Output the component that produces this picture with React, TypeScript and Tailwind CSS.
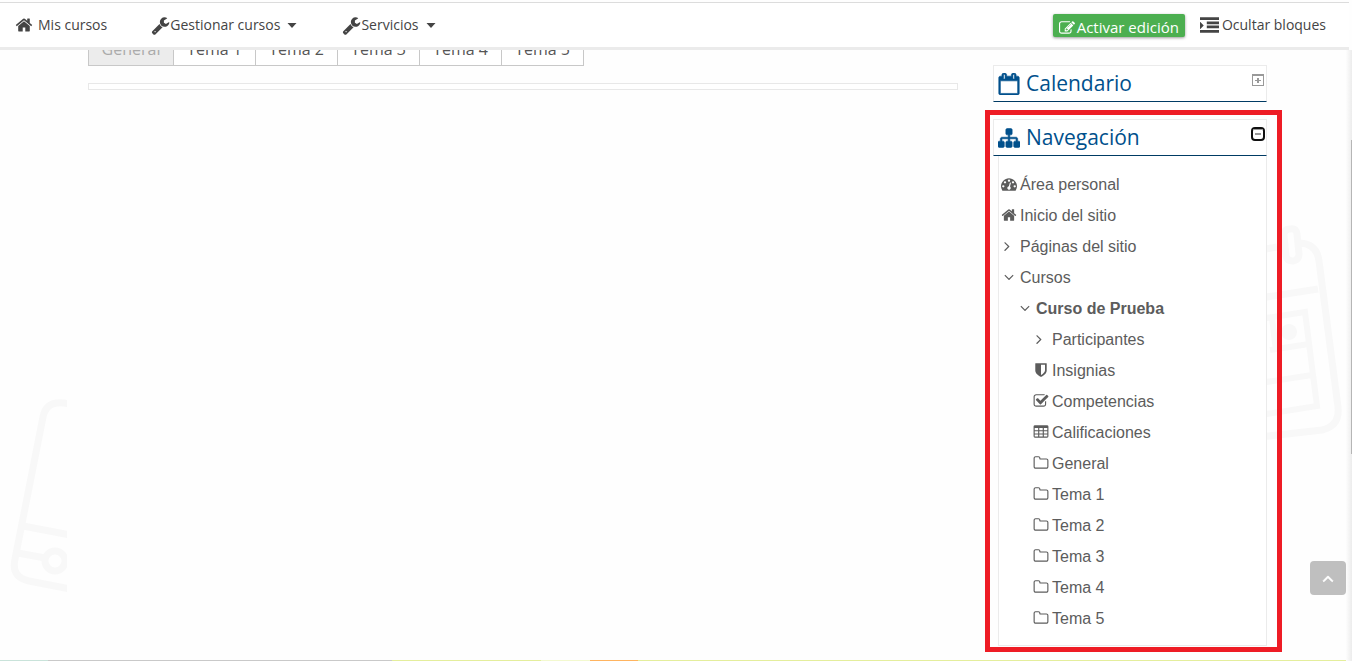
import { useState } from "react";
import type { ReactNode } from "react";

const ICONS = {
  home: "M1472 992v480q0 26-19 45t-45 19h-384v-384h-256v384h-384q-26 0-45-19t-19-45v-480q0-1 .5-3t.5-3l575-474 575 474q1 2 1 6zm223-69l-62 74q-8 9-21 11h-3q-13 0-21-7l-692-577-692 577q-12 8-24 7-13-2-21-11l-62-74q-8-10-7-23.5t11-21.5l719-599q32-26 76-26t76 26l244 204v-195q0-14 9-23t23-9h192q14 0 23 9t9 23v408l219 182q10 8 11 21.5t-7 23.5z",
  wrench:
    "M448 1472q0-26-19-45t-45-19-45 19-19 45 19 45 45 19 45-19 19-45zm644-420l-682 682q-37 37-90 37-52 0-91-37l-106-108q-38-36-38-90 0-53 38-91l681-681q39 98 114.5 173.5t173.5 114.5zm634-435q0 39-23 106-47 134-164.5 217.5t-258.5 83.5q-185 0-316.5-131.5t-131.5-316.5 131.5-316.5 316.5-131.5q58 0 121.5 16.5t107.5 46.5q16 11 16 28t-16 28l-293 169v224l193 107q5-3 79-48.5t135.5-81 70.5-35.5q15 0 23.5 10t8.5 25z",
  edit: "M888 1184l116-116-152-152-116 116v56h96v96h56zm440-720q-16-16-33 1l-350 350q-17 17-1 33t33-1l350-350q17-17 1-33zm80 594v190q0 119-84.5 203.5t-203.5 84.5h-832q-119 0-203.5-84.5t-84.5-203.5v-832q0-119 84.5-203.5t203.5-84.5h832q63 0 117 25 15 7 18 23 3 17-9 29l-49 49q-14 14-32 8-23-6-45-6h-832q-66 0-113 47t-47 113v832q0 66 47 113t113 47h832q66 0 113-47t47-113v-126q0-13 9-22l64-64q15-15 35-7t20 29zm-96-738l288 288-672 672h-288v-288zm444 132l-92 92-288-288 92-92q28-28 68-28t68 28l152 152q28 28 28 68t-28 68z",
  indent:
    "M352 896l-320 320h-32v-640h32zM0 128h1792v256h-1792zM640 512h1152v256h-1152zM640 896h1152v256h-1152zM0 1312h1792v256h-1792z",
  calendar:
    "M192 1664h1408v-1024h-1408v1024zm384-1216v-288q0-14-9-23t-23-9h-64q-14 0-23 9t-9 23v288q0 14 9 23t23 9h64q14 0 23-9t9-23zm768 0v-288q0-14-9-23t-23-9h-64q-14 0-23 9t-9 23v288q0 14 9 23t23 9h64q14 0 23-9t9-23zm384-64v1280q0 52-38 90t-90 38h-1408q-52 0-90-38t-38-90v-1280q0-52 38-90t90-38h128v-96q0-66 47-113t113-47h64q66 0 113 47t47 113v96h384v-96q0-66 47-113t113-47h64q66 0 113 47t47 113v96h128q52 0 90 38t38 90z",
  sitemap:
    "M1792 1248v320q0 40-28 68t-68 28h-320q-40 0-68-28t-28-68v-320q0-40 28-68t68-28h96v-192h-512v192h96q40 0 68 28t28 68v320q0 40-28 68t-68 28h-320q-40 0-68-28t-28-68v-320q0-40 28-68t68-28h96v-192h-512v192h96q40 0 68 28t28 68v320q0 40-28 68t-68 28h-320q-40 0-68-28t-28-68v-320q0-40 28-68t68-28h96v-192q0-52 38-90t90-38h512v-192h-96q-40 0-68-28t-28-68v-320q0-40 28-68t68-28h320q40 0 68 28t28 68v320q0 40-28 68t-68 28h-96v192h512q52 0 90 38t38 90v192h96q40 0 68 28t28 68z",
  dashboard:
    "M384 1152q0-53-37.5-90.5t-90.5-37.5-90.5 37.5-37.5 90.5 37.5 90.5 90.5 37.5 90.5-37.5 37.5-90.5zm192-448q0-53-37.5-90.5t-90.5-37.5-90.5 37.5-37.5 90.5 37.5 90.5 90.5 37.5 90.5-37.5 37.5-90.5zm428 481l101-382q6-26-7.5-48.5t-38.5-29.5-48 6.5-30 39.5l-101 382q-60 5-107 43.5t-63 98.5q-20 77 20 146t117 89 146-20 89-117q16-60-6-117t-72-91zm660-33q0-53-37.5-90.5t-90.5-37.5-90.5 37.5-37.5 90.5 37.5 90.5 90.5 37.5 90.5-37.5 37.5-90.5zm-640-640q0-53-37.5-90.5t-90.5-37.5-90.5 37.5-37.5 90.5 37.5 90.5 90.5 37.5 90.5-37.5 37.5-90.5zm448 192q0-53-37.5-90.5t-90.5-37.5-90.5 37.5-37.5 90.5 37.5 90.5 90.5 37.5 90.5-37.5 37.5-90.5zm320 448q0 261-141 483-19 29-54 29h-1402q-35 0-54-29-141-221-141-483 0-182 71-348t191-286 286-191 348-71 348 71 286 191 191 286 71 348z",
  right:
    "M947 960q0 13-10 23l-466 466q-10 10-23 10t-23-10l-50-50q-10-10-10-23t10-23l393-393-393-393q-10-10-10-23t10-23l50-50q10-10 23-10t23 10l466 466q10 10 10 23z",
  down: "M1395 736q0 13-10 23l-466 466q-10 10-23 10t-23-10l-466-466q-10-10-10-23t10-23l50-50q10-10 23-10t23 10l393 393 393-393q10-10 23-10t23 10l50 50q10 10 10 23z",
  up: "M1395 1184q0 13-10 23l-50 50q-10 10-23 10t-23-10l-393-393-393 393q-10 10-23 10t-23-10l-50-50q-10-10-10-23t10-23l466-466q10-10 23-10t23 10l466 466q10 10 10 23z",
  shield:
    "M1344 960v-640h-448v1137q119-63 213-137 235-184 235-360zm192-768v768q0 86-33.5 170.5t-83 150-118 127.5-126.5 103-121 77.5-89.5 49.5-42.5 20q-12 6-26 6t-26-6q-16-7-42.5-20t-89.5-49.5-121-77.5-126.5-103-118-127.5-83-150-33.5-170.5v-768q0-26 19-45t45-19h1152q26 0 45 19t19 45z",
  check:
    "M1472 930v318q0 119-84.5 203.5t-203.5 84.5h-832q-119 0-203.5-84.5t-84.5-203.5v-832q0-119 84.5-203.5t203.5-84.5h832q63 0 117 25 15 7 18 23 3 17-9 29l-49 49q-10 10-23 10-3 0-9-2-23-6-45-6h-832q-66 0-113 47t-47 113v832q0 66 47 113t113 47h832q66 0 113-47t47-113v-254q0-13 9-22l64-64q10-10 23-10 6 0 12 3 20 8 20 29zm231-489l-814 814q-24 24-57 24t-57-24l-430-430q-24-24-24-57t24-57l110-110q24-24 57-24t57 24l263 263 647-647q24-24 57-24t57 24l110 110q24 24 24 57t-24 57z",
  table:
    "M224 128h1344q160 0 160 160v1088q0 160-160 160h-1344q-160 0-160-160v-1088q0-160 160-160zM192 448v256h384v-256zM704 448v256h384v-256zM1216 448v256h384v-256zM192 816v256h384v-256zM704 816v256h384v-256zM1216 816v256h384v-256zM192 1184v224h384v-224zM704 1184v224h384v-224zM1216 1184v224h384v-224z",
  folder:
    "M1600 1312v-704q0-40-28-68t-68-28h-704q-40 0-68-28t-28-68v-64q0-40-28-68t-68-28h-320q-40 0-68 28t-28 68v960q0 40 28 68t68 28h1216q40 0 68-28t28-68zm128-704v704q0 92-66 158t-158 66h-1216q-92 0-158-66t-66-158v-960q0-92 66-158t158-66h320q92 0 158 66t66 158v32h672q92 0 158 66t66 158z",
};

type IconName = keyof typeof ICONS;

const Icon = ({ name, className }: { name: IconName; className: string }) => (
  <svg
    viewBox="0 0 1792 1792"
    className={className}
    fill="currentColor"
    fillRule={name === "table" ? "evenodd" : "nonzero"}
    aria-hidden="true"
  >
    <path d={ICONS[name]} />
  </svg>
);

const Caret = () => (
  <svg viewBox="0 0 10 5" className="ml-[7px] h-[5px] w-2.5" fill="currentColor" aria-hidden="true">
    <path d="M0.5 0h9L5 5z" />
  </svg>
);

type TreeItem = {
  label: string;
  icon: IconName;
  level: number;
  bold?: boolean;
};

const tree: TreeItem[] = [
  { label: "Área personal", icon: "dashboard", level: 0 },
  { label: "Inicio del sitio", icon: "home", level: 0 },
  { label: "Páginas del sitio", icon: "right", level: 0 },
  { label: "Cursos", icon: "down", level: 0 },
  { label: "Curso de Prueba", icon: "down", level: 1, bold: true },
  { label: "Participantes", icon: "right", level: 2 },
  { label: "Insignias", icon: "shield", level: 2 },
  { label: "Competencias", icon: "check", level: 2 },
  { label: "Calificaciones", icon: "table", level: 2 },
  { label: "General", icon: "folder", level: 2 },
  { label: "Tema 1", icon: "folder", level: 2 },
  { label: "Tema 2", icon: "folder", level: 2 },
  { label: "Tema 3", icon: "folder", level: 2 },
  { label: "Tema 4", icon: "folder", level: 2 },
  { label: "Tema 5", icon: "folder", level: 2 },
];

const levelPadding = ["pl-0.5", "pl-[18px]", "pl-[34px]"];

const tabs = ["General", "Tema 1", "Tema 2", "Tema 3", "Tema 4", "Tema 5"];

const TopBar = () => (
  <header className="relative z-10 mr-[3px] flex h-12 items-center border-t border-b-3 border-t-[#dcdcdc] border-b-[#ebebeb] bg-white pr-[23px] pl-[15px] text-sm text-[#444]">
    <nav className="flex items-center">
      <a href="#cursos" className="flex items-center">
        <Icon name="home" className="mr-[5px] h-[18px] w-[18px]" />
        Mis cursos
      </a>
      <button className="ml-11 flex items-center">
        <Icon name="wrench" className="h-[19px] w-[19px]" />
        Gestionar cursos
        <Caret />
      </button>
      <button className="ml-[45px] flex items-center">
        <Icon name="wrench" className="h-[19px] w-[19px]" />
        Servicios
        <Caret />
      </button>
    </nav>
    <div className="ml-auto flex items-center">
      <button className="flex h-[23px] items-center rounded-xs bg-[#4caf50] px-1.5 pt-1.5 text-[15px] font-medium text-white shadow-[0_1px_3px_rgba(0,0,0,0.4)]">
        <Icon name="edit" className="mr-0.5 h-4 w-4" />
        Activar edición
      </button>
      <button className="ml-[15px] flex items-center">
        <Icon name="indent" className="mr-[3px] h-[19px] w-[19px]" />
        Ocultar bloques
      </button>
    </div>
  </header>
);

const BlockHeader = ({
  icon,
  title,
  children,
}: {
  icon: IconName;
  title: string;
  children: ReactNode;
}) => (
  <div className="flex h-[37px] items-start border border-[#ebebeb] border-b-[#003b64] bg-white text-[#00508c]">
    <Icon name={icon} className="mt-[7px] ml-1 h-[22px] w-[22px] stroke-current stroke-[50px]" />
    <h2 className="ml-1.5 text-[21px] leading-[34px] font-normal">{title}</h2>
    {children}
  </div>
);

// phone outline, cut off by the content column
const LeftDrawing = () => (
  <svg
    viewBox="0 380 67 230"
    className="absolute top-[380px] left-0 h-[230px] w-[67px]"
    fill="none"
    stroke="#f8f8f8"
    strokeWidth="7"
    aria-hidden="true"
  >
    <path d="M70 404l-6-1q-18-2-21 14L15 559q-4 18 14 22l41 8M23 526l47 9M18 553l27 5" />
    <circle cx="55" cy="561" r="10" />
  </svg>
);

const RightDrawing = () => (
  <svg
    viewBox="1260 210 92 250"
    className="absolute top-[210px] right-0 h-[250px] w-[92px]"
    fill="none"
    stroke="#f8f8f8"
    strokeWidth="7"
    aria-hidden="true"
  >
    <path d="M1260 250l17-3M1300 243q17 1 19 18l19 146q2 19-16 23l-62 7M1260 298l58-9" />
    <path d="M1260 319l45-7 12 94-57 9M1270 350l39-6M1260 383l52-8M1272 318l4 33" strokeWidth="6" />
    <path d="M1284 235q0-6 6-6 6-1 7 5l2 20q0 6-6 7-6 0-7-5z" />
    <circle cx="1289" cy="332" r="8" fill="#f8f8f8" stroke="none" />
  </svg>
);

const App = () => {
  const [open, setOpen] = useState(true);

  return (
    <div className="relative flex min-h-screen flex-col overflow-hidden bg-[#fefefe] pt-0.5 font-['Open_Sans','Noto_Sans',sans-serif]">
      <LeftDrawing />
      <RightDrawing />
      <div className="absolute top-[50px] right-0 bottom-0 w-1.5 bg-linear-to-r from-[#fdfdfd] to-[#ececec]" />
      <div className="absolute top-[140px] right-0 h-[314px] w-px bg-[#b5b5b5]" />

      <TopBar />

      <main className="flex flex-1 items-start pr-[70px] pb-2 pl-[88px]">
        <section className="-mt-[18px] min-w-0 flex-1">
          <nav className="flex text-base text-[#555]">
            {tabs.map((tab, i) => (
              <a
                key={tab}
                href={`#tab-${i}`}
                className={
                  i === 0
                    ? "h-[34px] w-[86px] border border-[#c8c8c8] bg-[#ececec] text-center leading-8 text-[#aaa]"
                    : "h-[34px] w-[82px] border border-l-0 border-[#c8c8c8] bg-white text-center leading-8"
                }
              >
                {tab}
              </a>
            ))}
          </nav>
          <div className="mt-[17px] h-[7px] border border-[#e8e8e8] bg-white" />
        </section>

        <aside className="relative ml-[27px] w-[297px] pt-[15px]">
          <div className="mr-[15px] ml-2">
            <BlockHeader icon="calendar" title="Calendario">
              <button aria-label="Mostrar Calendario" className="mt-2 mr-0.5 ml-auto text-[#999]">
                <svg viewBox="0 0 12 12" className="h-3 w-3" fill="currentColor">
                  <path d="M0 0h12v12H0zM1 2v9h10V2z" fillRule="evenodd" />
                  <path d="M5 4h2v2h2v1H7v2H5V7H3V6h2z" />
                </svg>
              </button>
            </BlockHeader>
          </div>

          <div className="mt-2 border-5 border-[#ee1c25] pt-1 pr-2.5 pb-px pl-[3px]">
            <BlockHeader icon="sitemap" title="Navegación">
              <button
                aria-label="Ocultar Navegación"
                aria-expanded={open}
                onClick={() => setOpen(!open)}
                className="mt-[7px] mr-px ml-auto rounded-[4px] border-2 border-[#101010] text-[#999]"
              >
                <svg viewBox="0 0 10 10" className="h-2.5 w-2.5" fill="currentColor">
                  <path d="M0 0h10v1H0zM2 4h6v2H2z" />
                </svg>
              </button>
            </BlockHeader>
            {open && (
              <ul className="ml-[5px] border border-t-0 border-[#ebebeb] bg-white pt-[13px] pb-[11px] font-['Liberation_Sans',Arial,sans-serif] text-base text-[#5c5c5c]">
                {tree.map((item) => (
                  <li key={item.label} className={levelPadding[item.level]}>
                    <a
                      href="#nav"
                      className={
                        item.bold
                          ? "flex h-[31px] items-center font-bold"
                          : "flex h-[31px] items-center"
                      }
                    >
                      <Icon name={item.icon} className="mr-[3px] mb-px h-4 w-4" />
                      {item.label}
                    </a>
                  </li>
                ))}
              </ul>
            )}
          </div>
        </aside>
      </main>

      <button
        aria-label="Volver arriba"
        className="absolute right-1.5 bottom-[66px] flex h-[34px] w-9 items-center justify-center rounded-[4px] bg-[#bfbfbf] text-white"
      >
        <Icon name="up" className="h-[18px] w-[18px] stroke-current stroke-[80px]" />
      </button>

      <footer className="flex h-px">
        <div className="w-12 bg-[#c9e3da]" />
        <div className="w-[344px] bg-[#c9c9c9]" />
        <div className="w-[149px] bg-[#e4ee9c]" />
        <div className="w-[49px] bg-[#f3f9cf]" />
        <div className="w-12 bg-[#ffb460]" />
        <div className="flex-1 bg-[#e4ee9c]" />
      </footer>
    </div>
  );
};

export default App;
